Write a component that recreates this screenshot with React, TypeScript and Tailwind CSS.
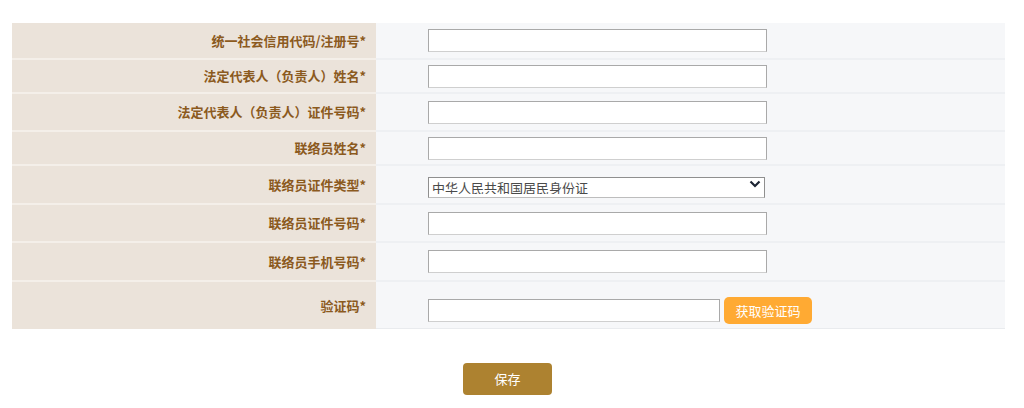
import React from 'react';

type Row = {
  label: string;
  h: string;
  kind?: 'select' | 'code';
};

const rows: Row[] = [
  { label: '统一社会信用代码/注册号*', h: 'h-[37px]' },
  { label: '法定代表人（负责人）姓名*', h: 'h-[34px]' },
  { label: '法定代表人（负责人）证件号码*', h: 'h-[38px]' },
  { label: '联络员姓名*', h: 'h-[34px]' },
  { label: '联络员证件类型*', h: 'h-[39px]', kind: 'select' },
  { label: '联络员证件号码*', h: 'h-[38px]' },
  { label: '联络员手机号码*', h: 'h-[39px]' },
  { label: '验证码*', h: 'h-[47px]', kind: 'code' },
];

const FONT = "font-['Microsoft_YaHei','Noto_Sans_CJK_SC',sans-serif]";

const App: React.FC = () => {
  return (
    <div className={`min-h-screen bg-white pt-[23px] px-[12px] ${FONT}`}>
      <div className="w-[993px]">
        {rows.map((row, i) => (
          <div key={i} className={`flex ${row.h} ${i < rows.length - 1 ? 'border-b-2 border-[#f4efe9]' : ''}`}>
            <div className="w-[364px] shrink-0 bg-[#ebe3da] flex items-center justify-end pr-[10px] text-[13px] font-bold text-[#8b5a1e]">
              {row.label}
            </div>
            <div
              className={`flex-1 bg-[#f6f7f9] flex items-center pl-[52px] ${
                i < rows.length - 1 ? 'border-b-2 border-[#eef0f3] -mb-[2px]' : 'border-b border-[#e9ebee]'
              } ${row.kind === 'code' ? 'pt-[11px]' : ''}`}
            >
              {row.kind === 'select' ? (
                <div className="relative w-[337px] h-[21px]">
                  <select className="appearance-none w-full h-full bg-white border border-[#8f8f8f] border-b-[#bdbdbd] pl-[3px] text-[13px] text-[#4a4a4a] leading-none outline-none">
                    <option>中华人民共和国居民身份证</option>
                  </select>
                  <svg
                    className="absolute right-[4px] top-[5px] w-[12px] h-[10px] pointer-events-none"
                    viewBox="0 0 12 10"
                    fill="none"
                  >
                    <path d="M1.5 2.5 L6 7 L10.5 2.5" stroke="#1c2433" strokeWidth="2.2" />
                  </svg>
                </div>
              ) : row.kind === 'code' ? (
                <div className="flex items-center gap-[4px]">
                  <input className="w-[292px] h-[23px] bg-white border border-[#a9a9a9] border-b-[#cfcfcf] outline-none" />
                  <button className="w-[88px] h-[27px] rounded-[5px] bg-[#ffaa33] text-white text-[13px]">
                    获取验证码
                  </button>
                </div>
              ) : (
                <input className="w-[339px] h-[23px] bg-white border border-[#a9a9a9] border-b-[#cfcfcf] outline-none" />
              )}
            </div>
          </div>
        ))}
      </div>
      <div className="w-[993px] flex justify-center pt-[34px]">
        <button className="w-[89px] h-[32px] rounded-[4px] bg-[#ad8230] text-white text-[13px] -ml-[2px]">
          保存
        </button>
      </div>
    </div>
  );
};

export default App;
